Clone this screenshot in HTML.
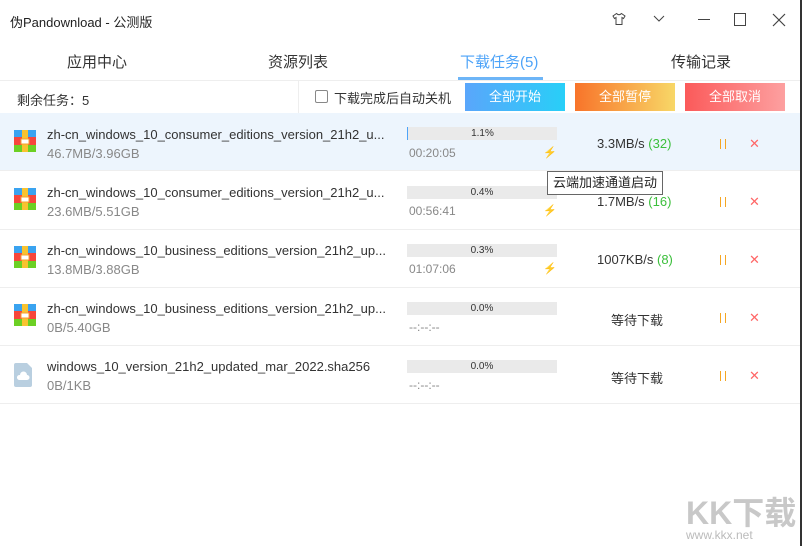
<!DOCTYPE html><html><head><meta charset="utf-8"><style>
*{margin:0;padding:0;box-sizing:border-box}
body{width:802px;height:546px;background:#fff;font-family:"Liberation Sans","Noto Sans CJK SC",sans-serif;position:relative;overflow:hidden;color:#333}
.a{position:absolute;white-space:nowrap}
.tab{font-size:15px;color:#333;top:51px}
.btn{top:83px;width:100px;height:28px;color:#fff;font-size:13px;text-align:center;line-height:28px}
.row{position:absolute;left:0;width:800px;height:58px;border-bottom:1px solid #eee}
.fn{left:47px;font-size:13px;color:#333}
.sz{left:47px;font-size:13px;color:#888}
.bar{left:407px;width:150px;height:13px;background:#eaeaea;font-size:10px;text-align:center;line-height:13px;color:#333}
.tm{left:409px;font-size:12px;color:#888}
.ic{left:14px;width:22px;height:22px}
.p{left:720px;width:6px;height:10px;border-left:1.5px solid #f5a623;border-right:1.5px solid #f5a623}
.x{left:749px;font-size:13px;color:#f66}
</style></head><body>
<div class="a" style="left:10px;top:12px;font-size:13px;color:#222">伪Pandownload - 公测版</div>
<svg class="a" style="left:612px;top:12px" width="14" height="14" viewBox="0 0 14 14" fill="none" stroke="#444" stroke-width="1"><path d="M4.5 1.5L1 4l1.5 2.5 1.5-1V12.5h6V5.5l1.5 1L13 4 9.5 1.5Q7 4 4.5 1.5z"/></svg>
<svg class="a" style="left:653px;top:15px" width="12" height="8" viewBox="0 0 12 8" fill="none" stroke="#444"><path d="M1 1l5 5 5-5"/></svg>
<div class="a" style="left:698px;top:19px;width:12px;height:1px;background:#444"></div>
<div class="a" style="left:734px;top:13px;width:12px;height:13px;border:1px solid #444"></div>
<svg class="a" style="left:772px;top:13px" width="14" height="14" viewBox="0 0 14 14" stroke="#444" stroke-width="1.2"><path d="M1 1l12 12M13 1L1 13"/></svg>
<div class="a tab" style="left:67px">应用中心</div>
<div class="a tab" style="left:268px">资源列表</div>
<div class="a tab" style="left:460px;color:#4da3f8">下载任务(5)</div>
<div class="a" style="left:458px;top:77px;width:85px;height:3px;background:#6db5f7"></div>
<div class="a tab" style="left:671px">传输记录</div>
<div class="a" style="left:0;top:80px;width:800px;height:1px;background:#eee"></div>
<div class="a" style="left:298px;top:81px;width:1px;height:32px;background:#eee"></div>
<div class="a" style="left:17px;top:90px;font-size:13px">剩余任务：5</div>
<div class="a" style="left:315px;top:90px;width:13px;height:13px;border:1px solid #888;border-radius:2px"></div>
<div class="a" style="left:334px;top:88px;font-size:13px">下载完成后自动关机</div>
<div class="a btn" style="left:465px;background:linear-gradient(90deg,#5aa6fb,#28cff8)">全部开始</div>
<div class="a btn" style="left:575px;background:linear-gradient(90deg,#f8742a,#f8d767)">全部暂停</div>
<div class="a btn" style="left:685px;background:linear-gradient(90deg,#fb5a5a,#fda0a0)">全部取消</div>

<div class="row" style="top:113px;background:#edf5fd"></div>
<div class="row" style="top:172px"></div>
<div class="row" style="top:230px"></div>
<div class="row" style="top:288px"></div>
<div class="row" style="top:346px"></div>

<svg class="a ic" style="top:130px" viewBox="0 0 22 22"><rect x="0" y="0" width="22" height="7" fill="#3aa3f0"/><rect x="0" y="7" width="22" height="8" fill="#f6463c"/><rect x="0" y="15" width="22" height="7" fill="#6cd024"/><rect x="8" y="0" width="6" height="22" fill="#f8c330"/><rect x="7" y="9" width="8" height="5" fill="#fff" stroke="#f6a030"/></svg>
<svg class="a ic" style="top:188px" viewBox="0 0 22 22"><rect x="0" y="0" width="22" height="7" fill="#3aa3f0"/><rect x="0" y="7" width="22" height="8" fill="#f6463c"/><rect x="0" y="15" width="22" height="7" fill="#6cd024"/><rect x="8" y="0" width="6" height="22" fill="#f8c330"/><rect x="7" y="9" width="8" height="5" fill="#fff" stroke="#f6a030"/></svg>
<svg class="a ic" style="top:246px" viewBox="0 0 22 22"><rect x="0" y="0" width="22" height="7" fill="#3aa3f0"/><rect x="0" y="7" width="22" height="8" fill="#f6463c"/><rect x="0" y="15" width="22" height="7" fill="#6cd024"/><rect x="8" y="0" width="6" height="22" fill="#f8c330"/><rect x="7" y="9" width="8" height="5" fill="#fff" stroke="#f6a030"/></svg>
<svg class="a ic" style="top:304px" viewBox="0 0 22 22"><rect x="0" y="0" width="22" height="7" fill="#3aa3f0"/><rect x="0" y="7" width="22" height="8" fill="#f6463c"/><rect x="0" y="15" width="22" height="7" fill="#6cd024"/><rect x="8" y="0" width="6" height="22" fill="#f8c330"/><rect x="7" y="9" width="8" height="5" fill="#fff" stroke="#f6a030"/></svg>
<svg class="a" style="left:14px;top:363px" width="18" height="24" viewBox="0 0 18 24"><path d="M0 2Q0 0 2 0H13L18 5V22Q18 24 16 24H2Q0 24 0 22Z" fill="#b9cfe0"/><path d="M5 17h8a2.5 2.5 0 0 0 0-5 3.5 3.5 0 0 0-7 0 2.5 2.5 0 0 0-1 5z" fill="#fff"/></svg>

<div class="a fn" style="top:127px">zh-cn_windows_10_consumer_editions_version_21h2_u...</div>
<div class="a sz" style="top:146px">46.7MB/3.96GB</div>
<div class="a bar" style="top:127px;border-left:1px solid #4da3f8">1.1%</div>
<div class="a tm" style="top:146px">00:20:05</div>
<div class="a" style="left:543px;top:146px;font-size:11px;color:#f5a623">⚡</div>
<div class="a" style="left:597px;top:136px;font-size:13px">3.3MB/s <span style="color:#3bbf3b">(32)</span></div>

<div class="a fn" style="top:185px">zh-cn_windows_10_consumer_editions_version_21h2_u...</div>
<div class="a sz" style="top:204px">23.6MB/5.51GB</div>
<div class="a bar" style="top:186px">0.4%</div>
<div class="a tm" style="top:204px">00:56:41</div>
<div class="a" style="left:543px;top:204px;font-size:11px;color:#f5a623">⚡</div>
<div class="a" style="left:597px;top:194px;font-size:13px">1.7MB/s <span style="color:#3bbf3b">(16)</span></div>

<div class="a fn" style="top:243px">zh-cn_windows_10_business_editions_version_21h2_up...</div>
<div class="a sz" style="top:262px">13.8MB/3.88GB</div>
<div class="a bar" style="top:244px">0.3%</div>
<div class="a tm" style="top:262px">01:07:06</div>
<div class="a" style="left:543px;top:262px;font-size:11px;color:#f5a623">⚡</div>
<div class="a" style="left:597px;top:252px;font-size:13px">1007KB/s <span style="color:#3bbf3b">(8)</span></div>

<div class="a fn" style="top:301px">zh-cn_windows_10_business_editions_version_21h2_up...</div>
<div class="a sz" style="top:320px">0B/5.40GB</div>
<div class="a bar" style="top:302px">0.0%</div>
<div class="a tm" style="top:320px">--:--:--</div>
<div class="a" style="left:611px;top:310px;font-size:13px">等待下载</div>

<div class="a fn" style="top:359px">windows_10_version_21h2_updated_mar_2022.sha256</div>
<div class="a sz" style="top:378px">0B/1KB</div>
<div class="a bar" style="top:360px">0.0%</div>
<div class="a tm" style="top:378px">--:--:--</div>
<div class="a" style="left:611px;top:368px;font-size:13px">等待下载</div>

<div class="a p" style="top:139px"></div>
<div class="a p" style="top:197px"></div>
<div class="a p" style="top:255px"></div>
<div class="a p" style="top:313px"></div>
<div class="a p" style="top:371px"></div>
<div class="a x" style="top:136px">✕</div>
<div class="a x" style="top:194px">✕</div>
<div class="a x" style="top:252px">✕</div>
<div class="a x" style="top:310px">✕</div>
<div class="a x" style="top:368px">✕</div>

<div class="a" style="left:547px;top:171px;height:24px;padding:0 5px;border:1px solid #666;background:#fff;font-size:13px;line-height:22px;color:#222">云端加速通道启动</div>

<div class="a" style="left:686px;top:488px;font-size:32px;font-weight:bold;color:#c8c8c8">KK下载</div>
<div class="a" style="left:686px;top:528px;font-size:12px;color:#bbb">www.kkx.net</div>
<div class="a" style="left:800px;top:0;width:2px;height:546px;background:#333"></div>
</body></html>
